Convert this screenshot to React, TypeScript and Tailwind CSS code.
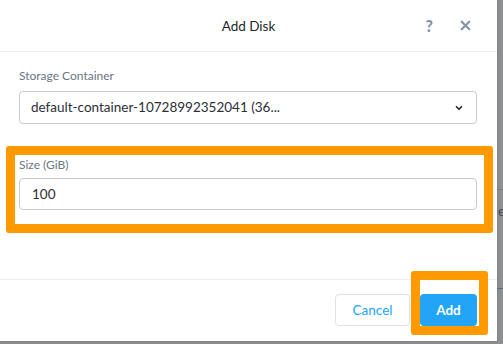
import { ChevronDown, X } from 'lucide-react';

export default function App() {
  return (
    <div className="relative w-[503px] h-[344px] overflow-hidden bg-[#8f9091] font-['Lato',sans-serif]">
      {/* backdrop bits peeking out on the right */}
      <div className="absolute left-[497px] top-[189px] w-[6px] h-px bg-[#7a7b7c]" />
      <span className="absolute left-[498px] top-[202px] text-[13px] text-[#3f4a55]">e</span>
      <div className="absolute left-[497px] top-[288px] w-[6px] h-px bg-[#5b6b7a]" />

      {/* Modal */}
      <div className="w-[497px] h-[341px] bg-white flex flex-col shadow-[0_0_4px_rgba(0,0,0,0.15)]">
        {/* Header */}
        <div className="relative h-[52px] shrink-0 border-b border-[#eceef0] flex items-center justify-center">
          <span className="text-[13.5px] text-[#22272e] pt-px">Add Disk</span>
          <div className="absolute right-[24px] top-0 h-full flex items-center gap-[25px] text-[#8393a4]">
            <span className="text-[16px] font-black leading-none">?</span>
            <X className="w-[15px] h-[15px]" strokeWidth={3.5} />
          </div>
        </div>

        {/* Body */}
        <div className="flex-1 flex flex-col">
          <div className="px-[19px] pt-[17px]">
            <label className="block text-[12px] text-[#6b7683] leading-[14px]">Storage Container</label>
            <div className="mt-[8px] w-[458px] h-[33px] rounded-[4px] border border-[#c5cbd3] flex items-center justify-between pl-[11px] pr-[12px]">
              <span className="text-[13.5px] text-[#2b3036]">default-container-10728992352041 (36...</span>
              <ChevronDown className="w-[10px] h-[10px] text-[#22272e]" strokeWidth={4} />
            </div>
          </div>

          {/* highlighted size field */}
          <div className="mt-[22px] ml-[6px] w-[487px] h-[87px] border-[9px] border-[#ff9900] rounded-[3px] px-[4px] pt-[3px]">
            <label className="block text-[12px] text-[#6b7683] leading-[14px]">Size (GiB)</label>
            <div className="mt-[6px] w-[458px] h-[32px] rounded-[4px] border border-[#c5cbd3] flex items-center pl-[12px]">
              <span className="text-[13.5px] text-[#2b3036]">100</span>
            </div>
          </div>
        </div>

        {/* Footer */}
        <div className="h-[62px] shrink-0 border-t border-[#eceef0] flex items-start justify-end pr-[20px] pt-[14px] gap-[10px]">
          <button className="w-[75px] h-[32px] rounded-[4px] border border-[#dfe3e8] bg-white text-[13.5px] text-[#22a5f7]">
            Cancel
          </button>
          <div className="relative w-[57px] h-[32px]">
            <div className="absolute -left-[9px] -top-[23px] w-[77px] h-[64px] border-[9px] border-[#ff9900] rounded-[3px]" />
            <button className="relative w-[57px] h-[32px] rounded-[4px] bg-[#22a5f7] text-[13.5px] font-bold text-white">
              Add
            </button>
          </div>
        </div>
      </div>
    </div>
  );
}
